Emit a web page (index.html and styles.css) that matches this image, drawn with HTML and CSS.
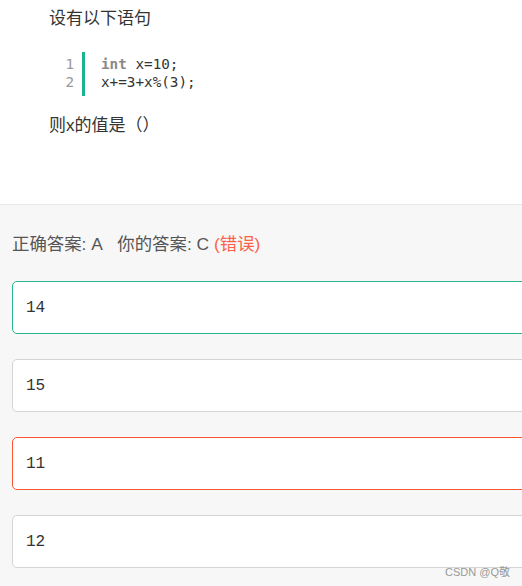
FILE: index.html
```html
<!DOCTYPE html>
<html lang="zh-CN">
<head>
<meta charset="utf-8">
<link rel="stylesheet" href="styles.css">
</head>
<body>
<div class="page">
  <section class="question">
    <p class="q-text">设有以下语句</p>
    <div class="code">
      <div class="nums"><span>1</span><span>2</span></div>
      <div class="lines"><span><b class="kw">int</b> x=10;</span><span>x+=3+x%(3);</span></div>
    </div>
    <p class="q-text q-ask">则x的值是（）</p>
  </section>
  <section class="answers">
    <p class="result">正确答案: A&nbsp;&nbsp; 你的答案: C <span class="wrong">(错误)</span></p>
    <div class="opts">
      <div class="opt correct">14</div>
      <div class="opt">15</div>
      <div class="opt chosen">11</div>
      <div class="opt">12</div>
    </div>
    <div class="mark">CSDN @Q敬</div>
  </section>
</div>
</body>
</html>
```
FILE: styles.css
```css
html, body {
  margin: 0;
  padding: 0;
}
body {
  width: 522px;
  height: 586px;
  overflow: hidden;
  background: #f7f7f7;
  font-family: "Liberation Sans", "Noto Sans CJK SC", sans-serif;
}
.page {
  display: flex;
  flex-direction: column;
}
.question {
  background: #fff;
  height: 204px;
  box-sizing: border-box;
  padding: 8px 0 0 49px;
}
.q-text {
  margin: 0;
  font-size: 17px;
  line-height: 22px;
  color: #333;
}
.q-ask {
  margin-top: 19px;
}
.code {
  display: flex;
  margin: 22px 0 0 0;
  font-family: "DejaVu Sans Mono", monospace;
  font-size: 14.3px;
  line-height: 18px;
}
.nums {
  display: flex;
  flex-direction: column;
  align-items: flex-end;
  width: 25px;
  color: #999;
  padding-right: 8px;
  padding-top: 3px;
}
.lines {
  display: flex;
  flex-direction: column;
  border-left: 3px solid #1ab394;
  padding: 3px 0 5px 16px;
  color: #333;
}
.kw {
  color: #888;
  font-weight: bold;
}
.answers {
  position: relative;
  overflow: hidden;
  border-top: 1px solid #e8e8e8;
  padding: 24px 0 0 12px;
  height: 381px;
}
.result {
  margin: 0;
  font-size: 17.4px;
  line-height: 30px;
  color: #555;
}
.wrong {
  color: #fa6248;
}
.opts {
  display: flex;
  flex-direction: column;
  gap: 25px;
  margin-top: 22px;
}
.opt {
  width: 600px;
  height: 53px;
  box-sizing: border-box;
  background: #fff;
  border: 1px solid #d4d4d4;
  border-radius: 5px;
  padding-left: 13px;
  display: flex;
  align-items: center;
  font-family: "Liberation Mono", monospace;
  font-size: 16px;
  color: #333;
}
.opt.correct {
  border-color: #2ab38e;
}
.opt.chosen {
  border-color: #fc5531;
}
.mark {
  position: absolute;
  left: 445px;
  top: 358px;
  font-size: 11px;
  color: #999;
  white-space: nowrap;
}
```
